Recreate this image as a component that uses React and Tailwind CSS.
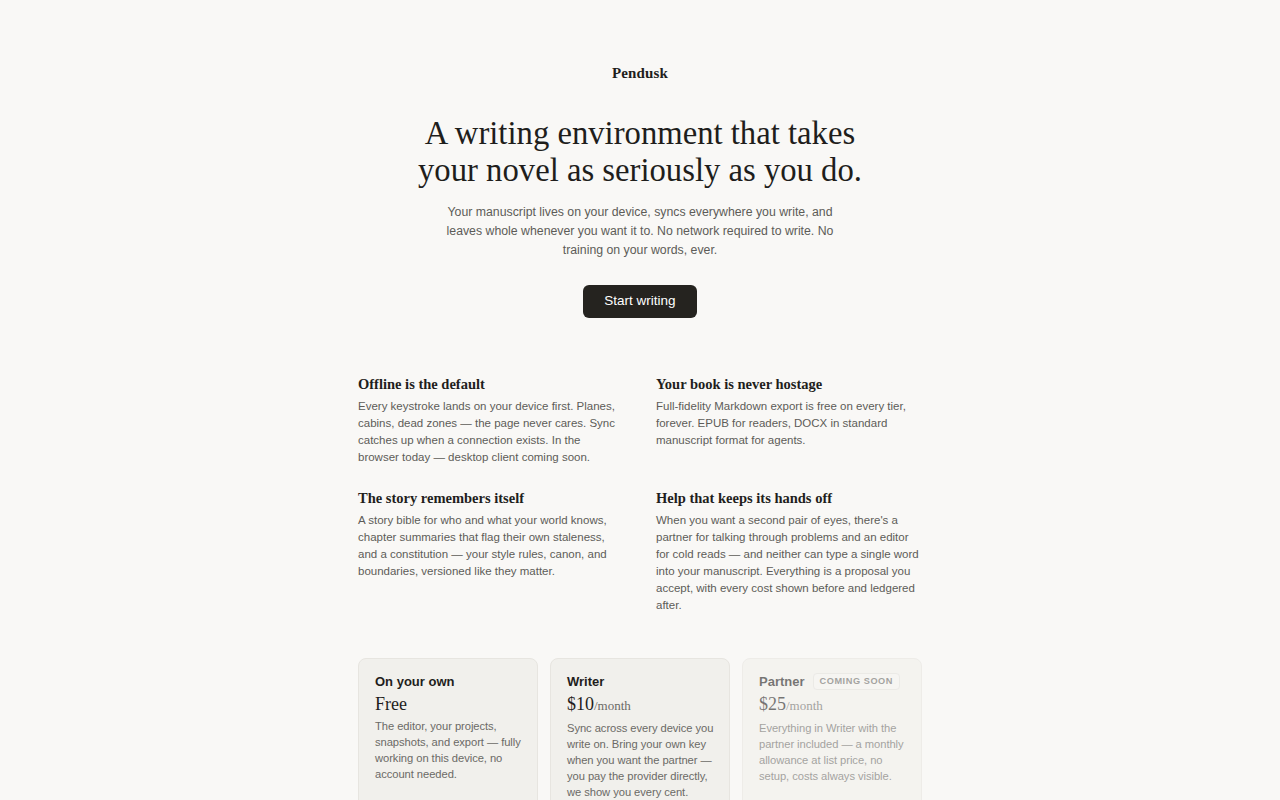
import React from 'react';

const serif = "font-['Liberation_Serif','DejaVu_Serif',serif]";
const sans = "font-['Liberation_Sans','Helvetica',sans-serif]";

const features = [
  {
    title: 'Offline is the default',
    body: 'Every keystroke lands on your device first. Planes, cabins, dead zones — the page never cares. Sync catches up when a connection exists. In the browser today — desktop client coming soon.',
  },
  {
    title: 'Your book is never hostage',
    body: 'Full-fidelity Markdown export is free on every tier, forever. EPUB for readers, DOCX in standard manuscript format for agents.',
  },
  {
    title: 'The story remembers itself',
    body: 'A story bible for who and what your world knows, chapter summaries that flag their own staleness, and a constitution — your style rules, canon, and boundaries, versioned like they matter.',
  },
  {
    title: 'Help that keeps its hands off',
    body: "When you want a second pair of eyes, there's a partner for talking through problems and an editor for cold reads — and neither can type a single word into your manuscript. Everything is a proposal you accept, with every cost shown before and ledgered after.",
  },
];

const plans = [
  {
    name: 'On your own',
    price: 'Free',
    body: 'The editor, your projects, snapshots, and export — fully working on this device, no account needed.',
  },
  {
    name: 'Writer',
    price: '$10',
    per: '/month',
    body: 'Sync across every device you write on. Bring your own key when you want the partner — you pay the provider directly, we show you every cent.',
  },
  {
    name: 'Partner',
    price: '$25',
    per: '/month',
    soon: true,
    body: 'Everything in Writer with the partner included — a monthly allowance at list price, no setup, costs always visible.',
  },
];

const PlanCard = ({ plan }) => (
  <div
    className={`rounded-lg border border-[#e7e5e0] bg-[#f1f0ec] pl-4 pr-[6px] pt-[13px] pb-6 ${
      plan.soon ? 'opacity-60' : ''
    }`}
  >
    <div className="flex items-center gap-[8px]">
      <h3 className={`${sans} text-[13px] font-bold leading-5 text-[#1f1e1c]`}>{plan.name}</h3>
      {plan.soon && (
        <span
          className={`${sans} whitespace-nowrap rounded border border-[#e3e1dc] bg-[#f5f4f1] px-1.5 py-[1px] text-[9.2px] font-bold tracking-[0.06em] text-[#6b6a66]`}
        >
          COMING SOON
        </span>
      )}
    </div>
    <div className={`${serif} text-[18px] leading-6 text-[#1f1e1c]`}>
      {plan.price}
      {plan.per && <span className="text-[13px] text-[#6b6a66]">{plan.per}</span>}
    </div>
    <p className={`${sans} mt-[2px] text-[11.2px] leading-4 tracking-[-0.005em] text-[#6b6a66]`}>
      {plan.body}
    </p>
  </div>
);

export default function App() {
  return (
    <div className="min-h-screen bg-[#f9f8f6] text-[#1f1e1c]">
      <div className="mx-auto w-[564px] pt-[62px]">
        <header className="flex justify-center">
          <span className={`${serif} text-[15px] font-bold tracking-[0.01em]`}>Pendusk</span>
        </header>

        <section className="mt-[30px] flex flex-col items-center text-center">
          <h1 className={`${serif} text-[32.7px] leading-[37px] text-[#1f1e1c]`}>
            A writing environment that takes
            <br />
            your novel as seriously as you do.
          </h1>
          <p className={`${sans} mt-[14px] w-[400px] text-[12.3px] leading-[19px] text-[#5d5c58]`}>
            Your manuscript lives on your device, syncs everywhere you write, and leaves whole
            whenever you want it to. No network required to write. No training on your words, ever.
          </p>
          <button
            className={`${sans} mt-[25px] h-[33px] w-[114px] rounded-md bg-[#25231f] text-[13.5px] font-medium text-white`}
          >
            Start writing
          </button>
        </section>

        <section className="mt-[56px] grid grid-cols-2 gap-x-8 gap-y-[22px]">
          {features.map((f) => (
            <div key={f.title}>
              <h2 className={`${serif} text-[14.5px] font-bold leading-5 text-[#1f1e1c]`}>{f.title}</h2>
              <p className={`${sans} mt-[4px] text-[11.5px] leading-[17px] text-[#5d5c58]`}>{f.body}</p>
            </div>
          ))}
        </section>

        <section className="mt-[44px] grid grid-cols-3 gap-3 pb-10">
          {plans.map((p) => (
            <PlanCard key={p.name} plan={p} />
          ))}
        </section>
      </div>
    </div>
  );
}
